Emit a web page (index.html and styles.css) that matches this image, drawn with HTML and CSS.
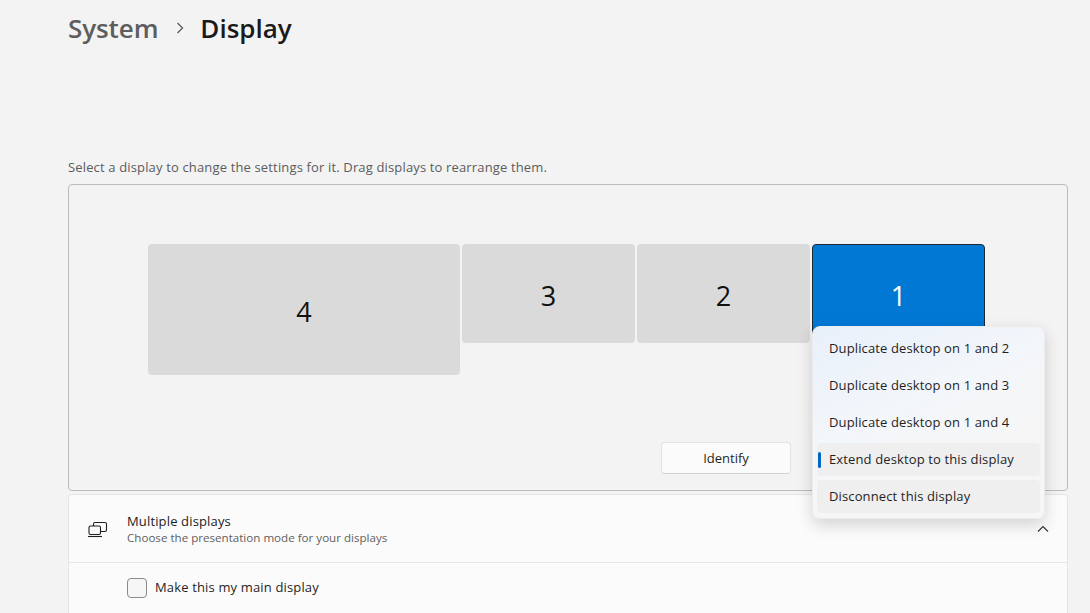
FILE: index.html
```
<!DOCTYPE html>
<html lang="en">
<head>
<meta charset="utf-8">
<title>Display</title>
<link rel="stylesheet" href="styles.css">
</head>
<body>
<main class="page">
  <header class="crumbs">
    <span class="crumb-parent">System</span>
    <svg class="crumb-sep" width="10" height="12" viewBox="0 0 10 12"><path d="M2.500 1 7.500 6l-5 5" fill="none" stroke="#5c5c5c" stroke-width="1.300"/></svg>
    <span class="crumb-current">Display</span>
  </header>
  <p class="hint">Select a display to change the settings for it. Drag displays to rearrange them.</p>
  <section class="arrange">
    <div class="monitors">
      <div class="monitor monitor-large">4</div>
      <div class="monitor">3</div>
      <div class="monitor">2</div>
      <div class="monitor monitor-active">1</div>
    </div>
    <div class="actions">
      <button class="identify">Identify</button>
    </div>
  </section>
  <section class="card">
    <div class="card-head">
      <svg class="card-icon" width="22" height="18" viewBox="0 0 22 18" fill="none" stroke="#1f1f1f" stroke-width="1.100">
        <rect x="3" y="6" width="11.500" height="8.500" rx="1.500"/>
        <path d="M7.500 6V4a1.500 1.500 0 0 1 1.500-1.500h10a1.500 1.500 0 0 1 1.500 1.500v6a1.500 1.500 0 0 1-1.500 1.500h-4.500"/>
        <path d="M2 16.500h14"/>
      </svg>
      <div class="card-text">
        <div class="card-title">Multiple displays</div>
        <div class="card-sub">Choose the presentation mode for your displays</div>
      </div>
      <svg class="chevron" width="12" height="8" viewBox="0 0 12 8"><path d="M1 6.500 6 1.500l5 5" fill="none" stroke="#333" stroke-width="1.100"/></svg>
    </div>
    <label class="card-row">
      <span class="checkbox"></span>
      <span class="check-label">Make this my main display</span>
    </label>
  </section>
</main>
<div class="flyout">
  <div class="opt">Duplicate desktop on 1 and 2</div>
  <div class="opt">Duplicate desktop on 1 and 3</div>
  <div class="opt">Duplicate desktop on 1 and 4</div>
  <div class="opt opt-on">Extend desktop to this display</div>
  <div class="opt opt-hover">Disconnect this display</div>
</div>
</body>
</html>
```
FILE: styles.css
```
* { box-sizing: border-box; }
html, body { margin: 0; height: 100%; overflow: hidden; }
body {
  background: #f3f3f3;
  font-family: "Open Sans", "Noto Sans", sans-serif;
  color: #1b1b1b;
  position: relative;
}
.page { padding: 0 22px 0 68px; height: 613px; overflow: hidden; }
.crumbs { display: flex; align-items: center; height: 60px; padding-bottom: 5px; font-size: 26px; font-weight: 600; }
.crumb-parent { color: #5d5d5d; letter-spacing: -0.100px; }
.crumb-sep { margin: 0 15px 0 17px; }
.crumb-current { color: #1a1a1a; letter-spacing: 0; }
.hint { margin: 0; padding-top: 98px; height: 124px; font-size: 13px; line-height: 18px; color: #5c5c5c; letter-spacing: 0.150px; }
.arrange {
  height: 307px;
  background: #f3f3f3;
  border: 1px solid #bdbdbd;
  border-radius: 4px;
  position: relative;
  padding: 59px 0 0 79px;
}
.monitors { display: flex; align-items: flex-start; gap: 2px; }
.monitor {
  width: 173px;
  height: 99px;
  padding-top: 4px;
  background: #dadada;
  border-radius: 4px;
  display: flex;
  align-items: center;
  justify-content: center;
  font-size: 27px;
  color: #111;
}
.monitor-large { width: 312px; height: 131px; }
.monitor-active { background: #0078d4; color: #fff; border: 1px solid #1c2a36; }
.actions { position: absolute; left: 592px; top: 257px; }
.identify {
  width: 130px;
  height: 32px;
  background: #fbfbfb;
  border: 1px solid #e3e3e3;
  border-bottom-color: #d2d2d2;
  border-radius: 4px;
  font: 13px "Open Sans", sans-serif;
  color: #1f1f1f;
}
.card {
  margin-top: 3px;
  background: #fbfbfb;
  border: 1px solid #e6e6e6;
  border-radius: 4px 4px 0 0;
  height: 130px;
}
.card-head { display: flex; align-items: center; height: 68px; padding: 0 18px 0 17px; border-bottom: 1px solid #e6e6e6; }
.card-icon { flex: none; margin-right: 19px; }
.card-text { flex: 1; }
.card-title { font-size: 13px; line-height: 17px; color: #1b1b1b; letter-spacing: 0.150px; }
.card-sub { font-size: 11.600px; line-height: 15px; color: #5f5f5f; letter-spacing: 0; }
.chevron { flex: none; }
.card-row { display: flex; align-items: center; height: 50px; padding-left: 58px; }
.checkbox { width: 20px; height: 20px; border: 1px solid #8a8a8a; border-radius: 4px; background: #f6f6f6; margin-right: 8px; }
.check-label { font-size: 13px; color: #1f1f1f; letter-spacing: 0.150px; padding-bottom: 2px; }
.flyout {
  position: absolute;
  left: 812px;
  top: 326px;
  width: 233px;
  height: 193px;
  padding: 5px 4px;
  border-radius: 8px;
  border: 1px solid #ececec;
  background: linear-gradient(155deg, #e8f0fa 0%, #f3f6fa 40%, #f6f6f6 70%);
  box-shadow: 0 6px 16px rgba(0,0,0,0.16);
  display: flex;
  flex-direction: column;
  gap: 4px;
}
.opt {
  height: 33px;
  flex: none;
  display: flex;
  align-items: center;
  padding: 0 0 2px 12px;
  font-size: 13px;
  color: #1f1f1f;
  border-radius: 4px;
  position: relative;
  letter-spacing: 0.130px;
}
.opt-on, .opt-hover { background: #efefef; }
.opt-on::before {
  content: "";
  position: absolute;
  left: 1px;
  top: 9px;
  width: 3px;
  height: 16px;
  border-radius: 2px;
  background: #0067c0;
}
```
